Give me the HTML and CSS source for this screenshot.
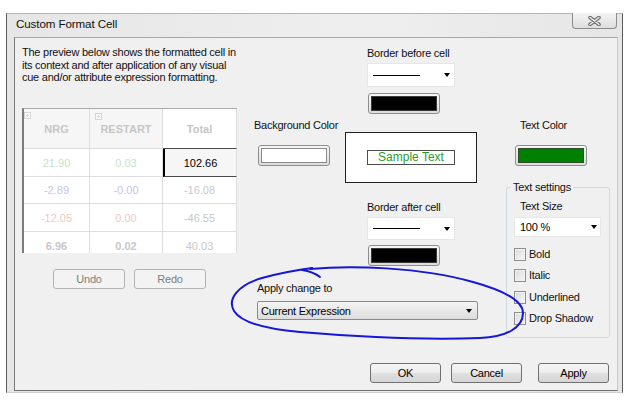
FILE: index.html
```html
<!DOCTYPE html>
<html>
<head>
<meta charset="utf-8">
<title>Custom Format Cell</title>
<link rel="stylesheet" href="styles.css">
</head>
<body>
<div class="window">
  <div class="titlebar">
    <span class="title">Custom Format Cell</span>
    <button class="close" aria-label="Close">
      <svg width="13" height="10" viewBox="0 0 13 10">
        <path d="M2 1.5 L11 8.5 M11 1.5 L2 8.5" stroke="#6b6b6b" stroke-width="3.6" stroke-linecap="round" fill="none"/>
        <path d="M2 1.5 L11 8.5 M11 1.5 L2 8.5" stroke="#f4f4f4" stroke-width="1.4" stroke-linecap="round" fill="none"/>
      </svg>
    </button>
  </div>
  <div class="panel">
    <div class="main">
      <div class="leftcol">
        <p class="desc">The preview below shows the formatted cell in<br>its context and after application of any visual<br>cue and/or attribute expression formatting.</p>
        <div class="grid">
          <div class="cell hd"><span class="plus"></span>NRG</div>
          <div class="cell hd"><span class="plus plus2"></span>RESTART</div>
          <div class="cell hd hd-total">Total</div>

          <div class="cell green">21.90</div>
          <div class="cell green">0.03</div>
          <div class="cell sel">102.66</div>

          <div class="cell blue">-2.89</div>
          <div class="cell blue">-0.00</div>
          <div class="cell gray">-16.08</div>

          <div class="cell red">-12.05</div>
          <div class="cell red">0.00</div>
          <div class="cell gray">-46.55</div>

          <div class="cell gray bold">6.96</div>
          <div class="cell gray bold">0.02</div>
          <div class="cell gray">40.03</div>
        </div>
        <div class="undo-row">
          <button class="btn dis">Undo</button>
          <button class="btn dis">Redo</button>
        </div>
      </div>

      <div class="rightgrid">
        <div class="stack before">
          <div class="lbl">Border before cell</div>
          <div class="dd"><span class="ln"></span><span class="arrow"></span></div>
          <div class="sw"><div class="fill black"></div></div>
        </div>

        <div class="colorgrp bgc">
          <div class="lbl">Background Color</div>
          <div class="sw"><div class="fill white"></div></div>
        </div>

        <div class="preview">
          <div class="sample">Sample Text</div>
        </div>

        <div class="colorgrp tcl">
          <div class="lbl">Text Color</div>
          <div class="sw"><div class="fill green"></div></div>
        </div>

        <div class="stack after">
          <div class="lbl">Border after cell</div>
          <div class="dd"><span class="ln"></span><span class="arrow"></span></div>
          <div class="sw"><div class="fill black"></div></div>
        </div>

        <fieldset class="settings">
          <legend>Text settings</legend>
          <div class="ts-lbl">Text Size</div>
          <div class="dd ts-dd"><span>100 %</span><span class="arrow"></span></div>
          <div class="checks">
            <div class="chk"><span class="box"></span>Bold</div>
            <div class="chk"><span class="box"></span>Italic</div>
            <div class="chk"><span class="box"></span>Underlined</div>
            <div class="chk"><span class="box"></span>Drop Shadow</div>
          </div>
        </fieldset>

        <div class="apply">
          <div class="lbl">Apply change to</div>
          <div class="combo"><span>Current Expression</span><span class="arrow"></span></div>
        </div>
      </div>
    </div>

    <div class="actions">
      <button class="btn ok">OK</button>
      <button class="btn cancel">Cancel</button>
      <button class="btn">Apply</button>
    </div>
  </div>
</div>

<svg class="scribble" width="643" height="410" viewBox="0 0 643 410">
  <path d="M310 269 C350 265 420 267 473 282 C502 290 523 300 523 313 C523 328 506 337 480 338 C430 340 360 337 300 332 C265 329 241 322 234 311 C227 299 238 285 262 278 C280 273 297 270 312 268" stroke="#1616d8" stroke-width="2" fill="none" stroke-linecap="round"/>
  <path d="M302 270 C309 271 315 273 320 277" stroke="#1616d8" stroke-width="2" fill="none" stroke-linecap="round"/>
</svg>
</body>
</html>
```

FILE: styles.css
```css
* {
  box-sizing: border-box;
}

html,
body {
  margin: 0;
  padding: 0;
  background: #ffffff;
}

body {
  width: 643px;
  height: 410px;
  overflow: hidden;
  font-family: "Liberation Sans", Arial, sans-serif;
  font-size: 11px;
  letter-spacing: -0.25px;
  color: #000;
}

button {
  font-family: inherit;
  font-size: 11px;
  letter-spacing: inherit;
  padding: 0;
  margin: 0;
}

/* ---------- window frame ---------- */
.window {
  margin: 13px 0 0 6px;
  width: 617px;
  height: 380px;
  border: 1px solid #5c5c5c;
  border-top-color: #b4b4b4;
  border-bottom-color: #cfcfcf;
  background: linear-gradient(to right, #e6e6e6 0%, #ececec 40%, #eeeeee 60%, #e6e6e6 100%);
  padding: 0 4px 1px 7px;
}

.titlebar {
  height: 23px;
  display: flex;
  align-items: flex-start;
}

.title {
  font-size: 11.6px;
  letter-spacing: -0.1px;
  line-height: 13px;
  padding: 3px 0 0 2px;
  color: #111;
}

.close {
  margin: -1px 1px 0 auto;
  width: 45px;
  height: 16px;
  border: 1px solid #8c8c8c;
  border-top: none;
  border-radius: 0 0 4px 4px;
  background: linear-gradient(#f4f4f4, #dedede);
  display: flex;
  align-items: center;
  justify-content: center;
}

.close svg {
  display: block;
}

/* ---------- inner panel ---------- */
.panel {
  height: 354px;
  border: 1px solid;
  border-color: #a6a6a6 #c8c8c8 #6e6e6e #7a7a7a;
  background: #f0f0f0;
  padding-top: 8px;
}

.main {
  display: flex;
  height: 292px;
}

.leftcol {
  width: 225px;
  padding-left: 7px;
}

.desc {
  margin: 0;
  line-height: 12.5px;
  height: 38px;
  color: #111;
  white-space: nowrap;
}

/* ---------- preview table ---------- */
.grid {
  margin-top: 24px;
  width: 215px;
  height: 145px;
  overflow: hidden;
  display: grid;
  grid-template-columns: 66px 73px 74px;
  grid-template-rows: 40px 28px 27px 28px 28px;
  border-left: 2px solid #7c7c7c;
  border-top: 1px solid #a9a9a9;
  background: #fff;
  letter-spacing: 0;
}

.cell {
  display: flex;
  align-items: center;
  justify-content: center;
  border-right: 1px solid #dedede;
  border-bottom: 1px solid #dedede;
  background: #fff;
}

.hd {
  position: relative;
  font-weight: bold;
  color: #c6c6c6;
  background: #f6f6f6;
}

.hd-total {
  background: #fff;
  border-bottom-color: #4a4a4a;
}

.plus {
  position: absolute;
  left: 0;
  top: 3px;
  width: 7px;
  height: 7px;
  border: 1px solid #d6d6d6;
  background:
    linear-gradient(#d6d6d6, #d6d6d6) center / 3px 1px no-repeat,
    linear-gradient(#d6d6d6, #d6d6d6) center / 1px 3px no-repeat,
    #fafafa;
}

.plus2 {
  left: 5px;
  top: 4px;
}

.green { color: #c4e4c4; }
.blue { color: #c4c4f2; }
.red { color: #f4c6c6; }
.gray { color: #c8c8c8; }
.bold { font-weight: bold; }

.sel {
  color: #000;
  background: #f6f6f6;
  border-left: 2px solid #000;
  border-bottom-color: #4a4a4a;
}

.undo-row {
  margin-top: 16px;
  padding-left: 31px;
  display: flex;
  gap: 9px;
}

/* ---------- buttons ---------- */
.btn {
  width: 71px;
  height: 20px;
  border: 1px solid #707070;
  border-radius: 3px;
  background: linear-gradient(#f5f5f5 0%, #ececec 48%, #dfdfdf 52%, #d6d6d6 100%);
  color: #000;
}

.btn.dis {
  width: 72px;
  border-color: #b0b4b7;
  background: #f3f3f3;
  color: #7e7e7e;
}

/* ---------- right side ---------- */
.rightgrid {
  display: grid;
  grid-template-columns: 105px 132px 29px 104px;
  grid-template-rows: 67px 74px 91px 60px;
}

.lbl {
  line-height: 13px;
  color: #111;
  white-space: nowrap;
}

.stack {
  grid-column: 2;
  width: 88px;
  justify-self: center;
}

.before {
  grid-row: 1;
  padding-top: 1px;
}

.before .dd {
  margin-top: 3px;
  height: 24px;
}

.before .sw {
  margin-top: 6px;
}

.after {
  grid-row: 3;
  padding-top: 14px;
}

.after .dd {
  margin-top: 3px;
}

.after .sw {
  margin-top: 5px;
}

.dd {
  height: 23px;
  background: #fff;
  border: 1px solid #e6e6e6;
  display: flex;
  align-items: center;
  justify-content: space-between;
  padding: 0 4px 0 5px;
}

.ln {
  width: 47px;
  height: 1px;
  background: #000;
}

.arrow {
  width: 0;
  height: 0;
  border-left: 3.5px solid transparent;
  border-right: 3.5px solid transparent;
  border-top: 4px solid #000;
}

.sw {
  width: 72px;
  height: 21px;
  margin-left: 1px;
  border: 1px solid #8e8e8e;
  border-radius: 3px;
  padding: 2px;
  background: linear-gradient(#f6f6f6, #dcdcdc);
}

.fill {
  height: 100%;
  border: 1px solid #6c6c6c;
}

.fill.black { background: #000; border-color: #3a3a3a; }
.fill.white { background: #fff; border-color: #8a8a8a; }
.fill.green { background: #008000; border-color: #2f4f2f; }

.colorgrp {
  grid-row: 2;
  padding-top: 6px;
}

.colorgrp .sw {
  margin-top: 13px;
}

.bgc {
  grid-column: 1;
}

.bgc .lbl {
  margin-left: 14px;
}

.bgc .sw {
  margin-left: 18px;
}

.tcl {
  grid-column: 4;
}

.tcl .lbl {
  margin-left: 14px;
}

.tcl .sw {
  margin-left: 9px;
}

.preview {
  grid-row: 2;
  grid-column: 2;
  margin-top: 19px;
  width: 132px;
  height: 51px;
  background: #fff;
  border: 1px solid #1f1f1f;
  display: flex;
  align-items: center;
  justify-content: center;
}

.sample {
  width: 88px;
  height: 15px;
  border: 1px solid #4c4c4c;
  color: #2c9c2c;
  font-size: 12px;
  letter-spacing: 0;
  line-height: 13px;
  text-align: center;
}

/* text settings group */
.settings {
  grid-column: 4;
  grid-row: 3 / span 2;
  margin: -6px 0 0 0;
  min-width: 0;
  border: 1px solid #d3dadf;
  border-radius: 3px;
  padding: 0 0 0 4px;
}

.settings legend {
  padding: 0 2px;
  line-height: 13px;
  color: #111;
}

.ts-lbl {
  margin: 6px 0 0 9px;
  line-height: 13px;
  color: #111;
}

.ts-dd {
  margin: 4px 0 0 3px;
  width: 87px;
  height: 20px;
  padding: 0 3px 0 5px;
}

.checks {
  margin: 11px 0 0 3px;
  display: flex;
  flex-direction: column;
  gap: 8.33px;
}

.chk {
  display: flex;
  align-items: center;
  height: 13px;
  line-height: 13px;
  color: #111;
}

.box {
  width: 12px;
  height: 13px;
  margin-right: 3px;
  border: 1px solid #8f8f8f;
  background: linear-gradient(135deg, #d9d9d9, #f8f8f8);
  box-shadow: inset 0 0 0 1px #f2f2f2;
}

/* apply change */
.apply {
  grid-column: 1 / span 2;
  grid-row: 4;
  padding-left: 17px;
  padding-top: 4px;
}

.combo {
  margin-top: 6px;
  width: 221px;
  height: 19px;
  border: 1px solid #8a8a8a;
  border-radius: 2px;
  background: linear-gradient(#f4f4f4, #dddddd);
  display: flex;
  align-items: center;
  justify-content: space-between;
  padding: 0 5px 0 3px;
  color: #000;
}

/* bottom action row */
.actions {
  margin-top: 25px;
  display: flex;
  justify-content: flex-end;
  padding-right: 8px;
}

.ok {
  margin-right: 10px;
}

.cancel {
  margin-right: 16px;
}

/* hand-drawn highlight over the dialog */
.scribble {
  position: absolute;
  left: 0;
  top: 0;
  pointer-events: none;
}
```
